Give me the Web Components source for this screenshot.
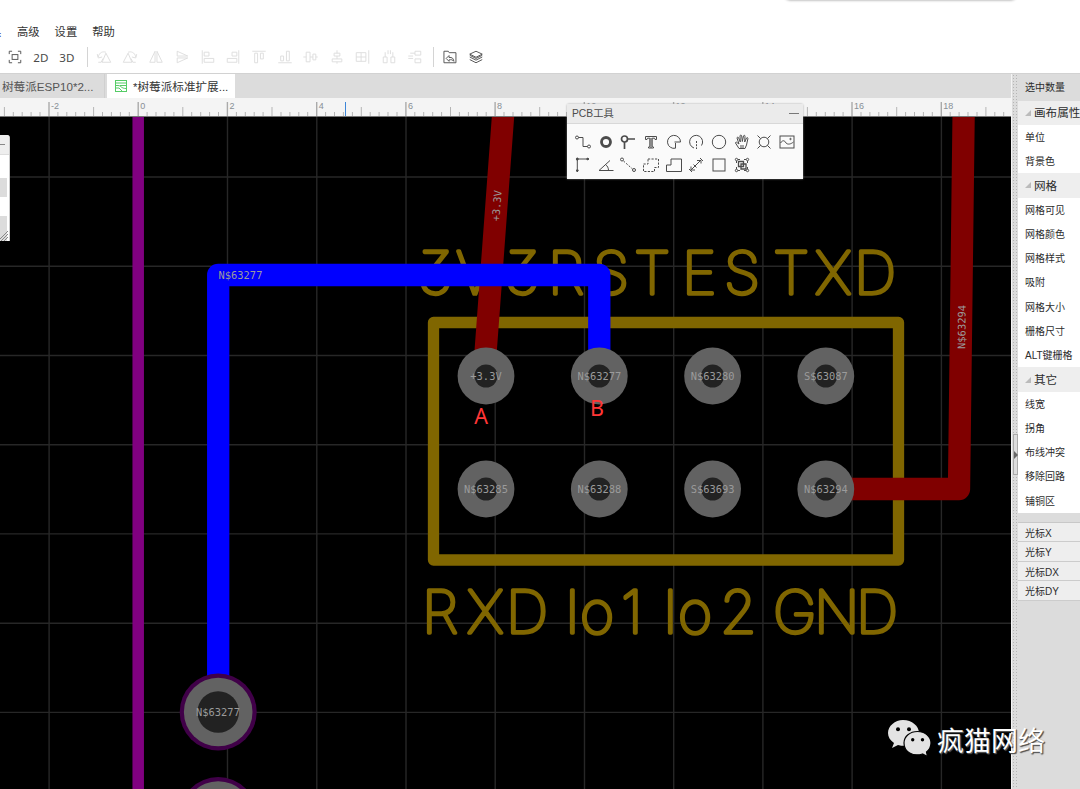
<!DOCTYPE html>
<html lang="zh">
<head>
<meta charset="utf-8">
<title>PCB</title>
<style>
html,body{margin:0;height:100%;overflow:hidden;background:#fff}
body{font-family:"Liberation Sans","Noto Sans CJK SC",sans-serif;color:#333}
</style>
</head>
<body>
<pcb-app></pcb-app>
<script>
class Base extends HTMLElement{
  constructor(){super();this.attachShadow({mode:'open'});}
  paint(h){this.shadowRoot.innerHTML=h;}
}
const ICONS={
 fit:'<path d="M2 5V2h3M11 2h3v3M14 11v3h-3M5 14H2v-3"/><rect x="5" y="5.500" width="6" height="5"/>',
 rotl:'<path d="M6 13.500h9L10 4zM2 8c1-5 5-6 8-5M1 5l1 4 4-1M2 13.500h3l2-4"/>',
 rotr:'<path d="M10 13.500H1L6 4zM14 8c-1-5-5-6-8-5M15 5l-1 4-4-1M14 13.500h-3l-2-4"/>',
 fliph:'<path d="M7 2v11.500H1.500zM9 2v11.500h5.500z"/>',
 flipv:'<path d="M3 2v5h11zM3 14V9h11z"/>',
 al:'<path d="M2 1v14M4 3h5v4H4zM4 9.500h10v4H4z"/>',
 ar:'<path d="M14 1v14M7 3h5v4H7zM2 9.500h10v4H2z"/>',
 at:'<path d="M1 2h14M3.500 4h3v10h-3zM9.500 4h3v6h-3z"/>',
 ab:'<path d="M1 14h14M3.500 7h3v5h-3zM9.500 2h3v10h-3z"/>',
 ch:'<path d="M3 3h4v10H3zM10 5h3v6h-3zM0 8h3M7 8h3M13 8h2"/>',
 cv:'<path d="M5 4h6v3H5zM3 10h10v3H3zM8 1v3M8 7v3M8 13v2"/>',
 grid:'<path d="M1 3.500h10v9H1zM6 3.500v9M1 8h10M14 1v14"/>',
 dh:'<path d="M2 8h4v6H2zM10 8h4v6h-4zM7 1v4M9.500 1v4M4 3v5M12 3v5"/>',
 dv:'<path d="M8 2h6v4H8zM8 10h6v4H8zM1 7h5M1 9.500h5M3 4h5"/>',
 folder:'<path d="M1.700 2h4.500l1 1.500h7v10.500H1.700zM4 9.500L7 6.500v2c3-.4 5 1 5 4-1-1.700-3-2-5-1.500v1.500z"/>',
 layers:'<path d="M8 2l6.500 3L8 8.300 1.500 5zM1.500 8L8 11.300 14.500 8M1.500 10.700L8 14l6.500-3.300M1.500 6.200L8 9.500l6.500-3.300"/>',
 track:'<circle cx="2" cy="3.500" r="1.500"/><path d="M3.500 3.500H8v9h4.500"/><circle cx="14" cy="12.500" r="1.500"/>',
 pad:'<circle cx="8" cy="8" r="4.500" stroke-width="2.800"/>',
 via:'<circle cx="4.500" cy="5" r="3" stroke-width="1.700"/><path d="M7.500 5H15M4.500 8v7" stroke-width="1.700"/>',
 text:'<path d="M2.500 2.500h11v3h-1.500l-.5-1.300H9.200v8.300l1.300.5v1h-5v-1l1.300-.5V4.200H4.500L4 5.500H2.500zM8 4v10"/>',
 arc1:'<path d="M10.500 14A6.600 6.600 0 1 1 14.500 8H9v4" stroke="none"/><path d="M9.500 14.200A6.500 6.500 0 1 1 14.500 8M14.500 8H8.500M9.500 14.200V9"/>',
 arc2:'<path d="M6 14A6.500 6.500 0 1 1 13.500 11.500"/><path d="M8.500 7v8" stroke-dasharray="2 1.200"/>',
 circ:'<circle cx="8" cy="8" r="6.700"/>',
 hand:'<path d="M5 14.500L1.500 9c0-1 1-1.200 1.700-.3L5 10 3 4c0-1 1.300-1.200 1.700 0L6.300 8 6 2c0-1.200 1.500-1.200 1.700 0l.6 5.500L9.500 2c.4-1.200 1.700-.7 1.500.4L10.700 8 12.500 4c.6-1 1.700-.3 1.400.7L12.500 11 11 14.500zM7 11v3M9 11v3"/>',
 hole:'<circle cx="8" cy="8" r="4.800"/><path d="M1.500 1.500L4.700 4.700M11.300 4.700l3.200-3.200M11.300 11.300l3.200 3.200M4.700 11.300l-3.200 3.200"/>',
 image:'<rect x="1" y="2" width="14" height="12"/><path d="M1.500 9c2-3 4-3 5.500 0 2 2 5 1 7.500-1"/><circle cx="11.500" cy="5" r=".7"/>',
 dim:'<path d="M2.300 15V2H14"/><path d="M2.300 1.500L1.800 3h1zM14 2l-2-1v2zM2.300 15l-1-2h2z" fill="#444"/><circle cx="2.300" cy="2" r="1" fill="#444"/>',
 angle:'<path d="M12 3.500L1 13.500H15.500M7.500 7.500c2 1.500 3 3.500 3 6"/>',
 conn:'<circle cx="2" cy="2.500" r="1.500"/><circle cx="14" cy="13" r="1.500"/><path d="M3.500 4l9 8" stroke-dasharray="2 1.500"/>',
 dregion:'<path d="M5 2h10.500v8.500h-4v4H.5V7H5z" stroke-dasharray="2.200 1.300"/>',
 region:'<path d="M5 2h10.500v12.500H.5V8H5z"/>',
 meas:'<path d="M3 13L13 3M12 1l3 3M1 12l3 3M9 3.500h4v3M3 9.500V13h4M5.500 7.500l3 3"/>',
 rect:'<rect x="2" y="2" width="12" height="12"/>',
 group:'<circle cx="2.500" cy="2.500" r="1.200"/><circle cx="13.500" cy="2.500" r="1.200"/><circle cx="2.500" cy="13.500" r="1.200"/><circle cx="13.500" cy="13.500" r="1.200"/><path d="M4.500 4.500h5v5h-5zM7 7h5v5H7z" stroke-width="1.300"/><path d="M4 2.500h2M10 2.500h2M2.500 4v2M2.500 10v2M13.500 4v2M13.500 10v2M4 13.500h2M10 13.500h2"/>'
};
customElements.define('ui-icon',class extends Base{connectedCallback(){
 this.paint(`<style>:host{display:block;width:16px;height:16px}svg{display:block;overflow:visible}</style>
 <svg width="16" height="16" viewBox="0 0 16 16" fill="none" stroke="currentColor" stroke-width="1">${ICONS[this.getAttribute('name')]}</svg>`);}});

customElements.define('menu-bar',class extends Base{connectedCallback(){
 this.paint(`<style>:host{display:flex;height:18px;padding-top:23px;margin-left:-10px;gap:15px;font-size:11.300px;line-height:18px;color:#333}
 span{white-space:nowrap}.k{color:#2a2a90;width:12px}</style><span class="k">具</span><span>高级</span><span>设置</span><span>帮助</span>`);}});

customElements.define('tool-bar',class extends Base{connectedCallback(){
 const off=['rotl','rotr','fliph','flipv','al','ar','at','ab','ch','cv','grid','dh','dv'];
 this.paint(`<style>:host{display:flex;align-items:center;height:33px;padding-left:2px;color:#555;border-bottom:1px solid #d2d2d2;box-sizing:border-box}
 .c{width:25.950px;display:flex;justify-content:center}.t{font:11.600px "Noto Sans",sans-serif;color:#4a4a4a}.off{color:#dedede}.s{width:1px;height:20px;background:#d4d4d4;margin:0 3px 0 5px}.s.a{margin-left:7px;margin-right:3px}
 ui-icon{transform:scale(.96)}</style>
 <div class="c"><ui-icon name="fit"></ui-icon></div><div class="c t">2D</div><div class="c t">3D</div><div class="s a"></div>
 ${off.map(n=>`<div class="c off"><ui-icon name="${n}"></ui-icon></div>`).join('')}<div class="s"></div>
 <div class="c"><ui-icon name="folder"></ui-icon></div><div class="c"><ui-icon name="layers"></ui-icon></div>`);}});

customElements.define('tab-strip',class extends Base{connectedCallback(){
 this.paint(`<style>:host{display:flex;height:24px;background:#dcdcdc;font-size:11.600px;line-height:25px;color:#555;white-space:nowrap}
 .a{width:105px;padding-left:2px;box-sizing:border-box;border-right:1px solid #d0d0d0;margin-right:2px}.b{width:128px;background:#fff;color:#333;display:flex;align-items:center;box-sizing:border-box;padding-left:8px;gap:6px;height:24px}
 </style><div class="a">树莓派ESP10*2...</div><div class="b"><svg width="12" height="12" viewBox="0 0 12 12" fill="none" stroke="#55cc66"><rect x=".5" y=".5" width="11" height="11"/><path d="M1 3h10M1 5.500h2c3 0 3 3 8 3M5 5.500h6M1 8h3l3 3"/></svg><span>*树莓派标准扩展...</span></div>`);}});

customElements.define('ruler-bar',class extends Base{connectedCallback(){
 let s='';const u=8.923;
 for(let i=-15;i<98;i++){const x=(138.200+i*u).toFixed(1);if(x>1011)break;
  const M=i%10===0,m=i%5===0;s+=`<path d="M${x} ${M?4:m?9:14}V19" stroke="${M?'#aaa':'#b5b5b5'}" stroke-width="${M?1.400:1}"/>`;
  if(M)s+=`<text x="${+x+2}" y="11">${i/5}</text>`;}
 this.paint(`<style>:host{display:block;height:19px;background:#f4f4f4;overflow:hidden}svg{display:block}text{font:9px "Liberation Sans",sans-serif;fill:#888f96}</style>
 <svg width="1011" height="19">${s}<path d="M345.500 4V19" stroke="#3d86d8"/><path d="M0 18.500H1011" stroke="#777"/></svg>`);}});

customElements.define('pcb-canvas',class extends Base{connectedCallback(){
 let g='';for(let i=-1;i<10;i++)g+=`M${(138.300+i*89.230).toFixed(1)} 100V800`;
 for(let i=0;i<8;i++)g+=`M0 ${(177+i*89.230).toFixed(1)}H1011`;
 const nets=[['+3.3V',486,376],['N$63277',599.300,376],['N$63280',712.600,376],['S$63087',825.800,376],['N$63285',486,489],['N$63288',599.300,489],['S$63693',712.600,489],['N$63294',825.800,489]];
 const pads=nets.map(([t,x,y])=>`<circle cx="${x}" cy="${y}" r="28.400" fill="#626262"/><circle cx="${x}" cy="${y}" r="11.500" fill="#222"/><text class="n" x="${x}" y="${y+4}">${t}</text>`).join('');
 this.paint(`<style>:host{display:block;flex:1;min-height:0;background:#000;overflow:hidden}svg{display:block}
 .n{font:10.400px "DejaVu Sans Mono",monospace;fill:#9b9b9b;text-anchor:middle}
 .silk{font:100 59px Inter,sans-serif;font-weight:100;fill:#806600;stroke:#806600;stroke-width:3.600;stroke-linejoin:round;stroke-linecap:round;font-feature-settings:"cv09" 1}
 .r{font:21.500px "Noto Sans",sans-serif;fill:#ff3636;text-anchor:middle}</style>
 <svg width="1011" height="672" viewBox="0 117 1011 672">
 <path d="${g}" stroke="#272727" stroke-width="1.400"/>
 <path d="M138.200 100V800" stroke="#800080" stroke-width="11.500"/>
 <text class="silk" y="294" x="418 456 505 548 593 634 682 724 773 815 854">3V3RSTESTXD</text>
 <text class="silk" y="633" x="422 467 506 0 565 580 621 0 663 678 720 0 773 814 856">RXD Io1 Io2 GND</text>
 <rect x="433.500" y="322.500" width="465" height="237.500" fill="none" stroke="#806600" stroke-width="11.300" stroke-linejoin="round"/>
 <path d="M503.500 110L483.800 376M963.800 100L959 489H826" fill="none" stroke="#800000" stroke-width="22.300" stroke-linejoin="round" stroke-linecap="round"/>
 <path d="M218.200 712V275H599.300V376" fill="none" stroke="#00f" stroke-width="22.300" stroke-linejoin="round"/>
 ${pads}
 <circle cx="218.200" cy="712" r="38.500" fill="#400048"/><circle cx="218.200" cy="712" r="34.300" fill="#626262"/><circle cx="218.200" cy="712" r="20.800" fill="#222"/>
 <circle cx="218.200" cy="815.500" r="38.500" fill="#400048"/><circle cx="218.200" cy="815.500" r="34.300" fill="#626262"/>
 <text class="n" x="218" y="716">N$63277</text><text class="n" x="240.500" y="278.500">N$63277</text>
 <text class="n" transform="translate(500.500 206) rotate(-86)">+3.3V</text><text class="n" transform="translate(965.500 327) rotate(-89.500)">N$63294</text>
 <text class="r" x="481" y="424">A</text><text class="r" x="597" y="415.500">B</text>
 </svg>`);}});

customElements.define('side-panel',class extends Base{connectedCallback(){
 const L=['#画布属性','单位','背景色','#网格','网格可见','网格颜色','网格样式','吸附','网格大小','栅格尺寸','ALT键栅格','#其它','线宽','拐角','布线冲突','移除回路','铺铜区'];
 this.paint(`<style>:host{display:flex;width:69px;height:100%;background:#dcdcdc;font-size:10px;color:#2c2c2c}
 .g{width:7px;box-sizing:border-box;border-left:1px solid #f4f4f4;flex:none;background-image:radial-gradient(circle,#b5b5b5 .6px,transparent .8px);background-size:3px 3px;position:relative}
 .h{position:absolute;left:1px;top:360px;width:3px;height:39px;border:1px solid #aaa;background:#ddd}.h:after{content:"";position:absolute;top:16px;left:0;border-left:4px solid #666;border-top:4px solid transparent;border-bottom:4px solid transparent}
 .p{flex:1;min-width:0;white-space:nowrap;overflow:hidden}.top{height:26.500px;line-height:28px;padding-left:7px}
 .row{height:24.280px;line-height:25px;padding-left:7px;background:#fff}
 .hd{background:#eee;font-size:11.600px;padding-left:7px;display:flex;align-items:center;gap:3px}.hd i{border-left:6px solid transparent;border-bottom:6px solid #bbb}
 .cur{margin-top:9px;border-top:1px solid #c8c8c8}.cur div{height:18.400px;line-height:21px;border-bottom:1px solid #ccc;background:#eee;padding-left:7px}</style>
 <div class="g"><div class="h"></div></div><div class="p"><div class="top">选中数量</div>
 ${L.map(t=>t[0]=='#'?`<div class="row hd"><i></i><span>${t.slice(1)}</span></div>`:`<div class="row">${t}</div>`).join('')}
 <div class="cur"><div>光标X</div><div>光标Y</div><div>光标DX</div><div>光标DY</div></div></div>`);}});

customElements.define('tool-box',class extends Base{connectedCallback(){
 const n=['track','pad','via','text','arc1','arc2','circ','hand','hole','image','dim','angle','conn','dregion','region','meas','rect','group'];
 this.paint(`<style>:host{display:block;position:absolute;left:567px;top:104px;width:236px;height:75px;background:#fafafa;border-radius:2px 2px 0 0;box-shadow:0 0 2px #999;color:#4c4c4c}
 .t{height:20px;background:#ebebeb;border-bottom:1px solid #d8d8d8;font-size:10.300px;line-height:20px;padding:0 4px 0 5px;display:flex;justify-content:space-between;align-items:center;box-sizing:border-box}
 .t i{width:10px;height:1px;background:#777}.g{display:grid;grid-template-columns:repeat(10,22.700px);grid-auto-rows:22.500px;padding:7px 0 0 4.500px;justify-items:center;align-items:center}</style>
 <div class="t"><slot></slot><i></i></div><div class="g">${n.map(x=>`<ui-icon name="${x}"></ui-icon>`).join('')}</div>`);}});

customElements.define('side-float',class extends Base{connectedCallback(){
 this.paint(`<style>:host{display:block;position:absolute;left:0;top:134.500px;width:10px;height:106.500px;background:#fff;border-radius:0 3px 0 0;overflow:hidden;box-sizing:border-box;border-right:1px solid #ccc}
 .h{height:19px;background:#eee;border-bottom:1px solid #ddd;display:flex;align-items:center}.h i{width:5px;height:1px;background:#888}.a{height:19.500px;margin-top:23px;width:7px;background:#dcdcdc}.b{height:25px;margin-top:19px;width:7px;background:#dcdcdc}svg{position:absolute;right:0;bottom:0}</style>
 <div class="h"><i></i></div><div class="a"></div><div class="b"></div><svg width="9" height="11" stroke="#888" fill="none"><path d="M0 9L8 1M0 12L8 4M3 12L8 7"/></svg>`);}});

customElements.define('water-mark',class extends Base{connectedCallback(){
 this.paint(`<style>:host{position:absolute;left:888px;top:718px;display:flex;align-items:center;gap:6px;height:42px}svg{flex:none}
 span{font:27px/42px "Noto Sans CJK SC",sans-serif;color:#fff;white-space:nowrap;text-shadow:1px 1px 1px #555,1px 1px 1px #555;position:relative;top:1px}</style>
 <svg width="43" height="42" viewBox="0 0 43 42"><path d="M15 2C7 2 0 8 0 15c0 4 2 7 6 10l-2 5 6-3c11 3 21-2 21-12C31 8 24 2 15 2z" fill="#e3e3e3"/>
 <path d="M29.500 13.500c7.500 0 13.500 5 13.500 11.500 0 4-2 7-4.500 9l1 4.500-5-2.500C25 39 16 34 16 25c0-6.500 6-11.500 13.500-11.500z" fill="#e3e3e3" stroke="#000" stroke-width="1.200"/>
 <g fill="#000"><circle cx="10" cy="11.300" r="2"/><circle cx="21" cy="11.300" r="2"/><circle cx="24.700" cy="21.700" r="1.700"/><circle cx="34.500" cy="21.700" r="1.700"/></g></svg><span><slot></slot></span>`);}});

customElements.define('pcb-app',class extends Base{connectedCallback(){
 this.paint(`<style>:host{display:flex;flex-direction:column;width:1080px;height:789px;overflow:hidden;position:relative;background:#fff}
 .body{flex:1;min-height:0;display:flex}.l{width:1011px;display:flex;flex-direction:column}
 .pop{position:absolute;left:786px;top:-9px;width:229px;height:8px;background:#fff;border-radius:4px;box-shadow:0 0 3px 1px #888}</style>
 <div class="pop"></div><menu-bar></menu-bar><tool-bar></tool-bar>
 <div class="body"><div class="l"><tab-strip></tab-strip><ruler-bar></ruler-bar><pcb-canvas></pcb-canvas></div><side-panel></side-panel></div>
 <side-float></side-float><tool-box>PCB工具</tool-box><water-mark>疯猫网络</water-mark>`);}});
</script>
</body>
</html>
